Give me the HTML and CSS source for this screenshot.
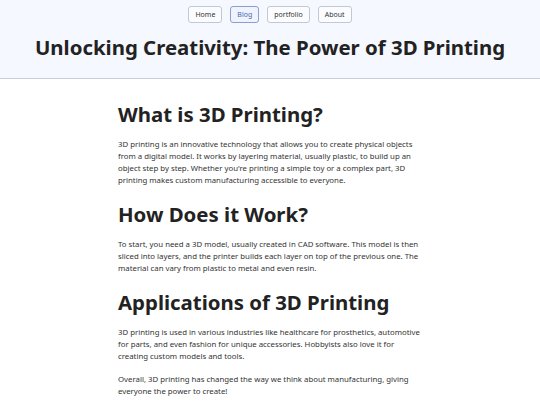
FILE: index.html
```html
<!DOCTYPE html>
<html lang="en">
<head>
<meta charset="utf-8">
<title>Unlocking Creativity: The Power of 3D Printing</title>
<link rel="stylesheet" href="styles.css">
</head>
<body>
<header class="site-header">
  <nav class="nav">
    <a class="nav-btn" href="#">Home</a>
    <a class="nav-btn active" href="#">Blog</a>
    <a class="nav-btn" href="#">portfolio</a>
    <a class="nav-btn" href="#">About</a>
  </nav>
  <h1 class="title">Unlocking Creativity: The Power of 3D Printing</h1>
</header>
<main class="content">
  <h2>What is 3D Printing?</h2>
  <p>3D printing is an innovative technology that allows you to create physical objects from a digital model. It works by layering material, usually plastic, to build up an object step by step. Whether you're printing a simple toy or a complex part, 3D printing makes custom manufacturing accessible to everyone.</p>
  <h2>How Does it Work?</h2>
  <p>To start, you need a 3D model, usually created in CAD software. This model is then sliced into layers, and the printer builds each layer on top of the previous one. The material can vary from plastic to metal and even resin.</p>
  <h2>Applications of 3D Printing</h2>
  <p>3D printing is used in various industries like healthcare for prosthetics, automotive for parts, and even fashion for unique accessories. Hobbyists also love it for creating custom models and tools.</p>
  <p>Overall, 3D printing has changed the way we think about manufacturing, giving everyone the power to create!</p>
</main>
</body>
</html>
```
FILE: styles.css
```css
* { box-sizing: border-box; }
html, body { margin: 0; padding: 0; }
body {
  font-family: "Noto Sans", "Open Sans", sans-serif;
  color: #222;
  background: #fff;
}
.site-header {
  background: #f5f8fe;
  border-bottom: 1px solid #c9cfd9;
  padding: 6px 0 0;
  height: 79px;
}
.nav {
  display: flex;
  justify-content: center;
  gap: 8px;
}
.nav-btn {
  display: inline-flex;
  align-items: center;
  height: 17px;
  padding: 0 6px;
  font-size: 7px;
  color: #333;
  text-decoration: none;
  background: #fbfcff;
  border: 1px solid #c3c8d2;
  border-radius: 3px;
}
.nav-btn.active {
  color: #4a68ad;
  border-color: #8aa0d0;
  background: #eef3fd;
}
.title {
  margin: 10px 0 0;
  text-align: center;
  font-size: 20.4px;
  line-height: 28px;
  font-weight: 700;
  color: #222;
}
.content {
  width: 304px;
  margin: 0 auto;
  padding-top: 21px;
}
h2 {
  margin: 0 0 10px;
  font-size: 20.4px;
  line-height: 28px;
  font-weight: 700;
  color: #222;
}
p {
  margin: 0 0 11px;
  font-size: 7.8px;
  line-height: 12px;
  color: #333;
}
p + h2 { margin-top: 14px; }
```
